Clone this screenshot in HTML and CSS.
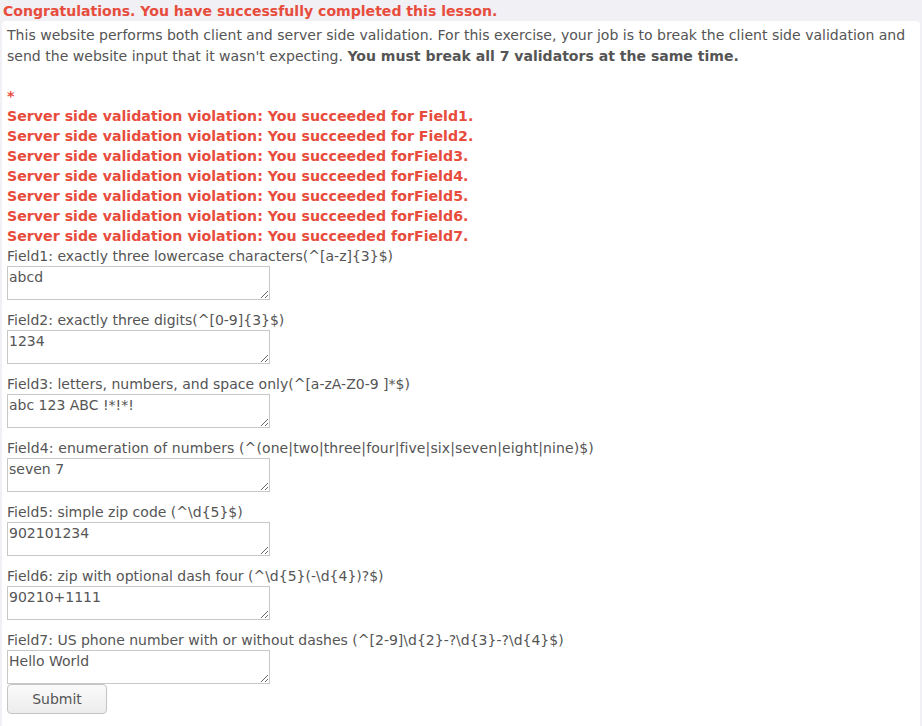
FILE: index.html
```html
<!DOCTYPE html>
<html>
<head>
<meta charset="utf-8">
<link rel="stylesheet" href="styles.css">
</head>
<body>
<div class="feedback">Congratulations. You have successfully completed this lesson.</div>
<div class="panel">
  <p class="intro">This website performs both client and server side validation. For this exercise, your job is to break the client side validation and send the website input that it wasn't expecting. <b>You must break all 7 validators at the same time.</b></p>
  <div class="errors">
    <div>*</div>
    <div>Server side validation violation: You succeeded for Field1.</div>
    <div>Server side validation violation: You succeeded for Field2.</div>
    <div>Server side validation violation: You succeeded forField3.</div>
    <div>Server side validation violation: You succeeded forField4.</div>
    <div>Server side validation violation: You succeeded forField5.</div>
    <div>Server side validation violation: You succeeded forField6.</div>
    <div>Server side validation violation: You succeeded forField7.</div>
  </div>
  <form class="form">
    <div class="field">
      <label>Field1: exactly three lowercase characters(^[a-z]{3}$)</label>
      <textarea>abcd</textarea>
    </div>
    <div class="field">
      <label>Field2: exactly three digits(^[0-9]{3}$)</label>
      <textarea>1234</textarea>
    </div>
    <div class="field">
      <label>Field3: letters, numbers, and space only(^[a-zA-Z0-9 ]*$)</label>
      <textarea>abc 123 ABC !*!*!</textarea>
    </div>
    <div class="field">
      <label class="wide">Field4: enumeration of numbers (^(one|two|three|four|five|six|seven|eight|nine)$)</label>
      <textarea>seven 7</textarea>
    </div>
    <div class="field">
      <label>Field5: simple zip code (^\d{5}$)</label>
      <textarea>902101234</textarea>
    </div>
    <div class="field">
      <label>Field6: zip with optional dash four (^\d{5}(-\d{4})?$)</label>
      <textarea>90210+1111</textarea>
    </div>
    <div class="field last">
      <label>Field7: US phone number with or without dashes (^[2-9]\d{2}-?\d{3}-?\d{4}$)</label>
      <textarea>Hello World</textarea>
    </div>
    <button type="button" class="submit">Submit</button>
  </form>
</div>
</body>
</html>
```

FILE: styles.css
```css
html, body {
  margin: 0;
  padding: 0;
}
body {
  background: #f0f0f5;
  font-family: "DejaVu Sans", sans-serif;
  font-size: 14px;
  color: #555555;
}
.feedback {
  color: #e74c3c;
  font-weight: bold;
  font-size: 14.07px;
  line-height: 20px;
  padding: 1px 3px 0;
}
.panel {
  background: #ffffff;
  margin: 0 2px;
  border-radius: 4px 4px 0 0;
  padding: 4px 5px 20px;
  min-height: 700px;
}
.intro {
  margin: 0 0 19px;
  font-size: 14.05px;
  line-height: 21px;
}
.errors {
  color: #e74c3c;
  font-weight: bold;
  font-size: 14.2px;
  line-height: 20px;
}
.form {
  display: flex;
  flex-direction: column;
  align-items: flex-start;
}
.field {
  display: flex;
  flex-direction: column;
  align-items: flex-start;
  margin-bottom: 10px;
}
.field.last {
  margin-bottom: 0;
}
.field label {
  line-height: 20px;
}
.field label.wide {
  letter-spacing: 0.1px;
}
.field textarea {
  box-sizing: border-box;
  width: 263px;
  height: 34px;
  margin: 0;
  border: 1px solid #c8c8c8;
  padding: 1px 1px;
  font-family: "DejaVu Sans", sans-serif;
  font-size: 14px;
  line-height: 18px;
  color: #555555;
  background: #fff;
  resize: both;
}
.submit {
  margin-top: 0;
  width: 100px;
  height: 30px;
  border: 1px solid #c4c4c4;
  border-radius: 4px;
  background: linear-gradient(#fafafa, #ececec);
  font-family: "DejaVu Sans", sans-serif;
  font-size: 14px;
  color: #555555;
}
```
